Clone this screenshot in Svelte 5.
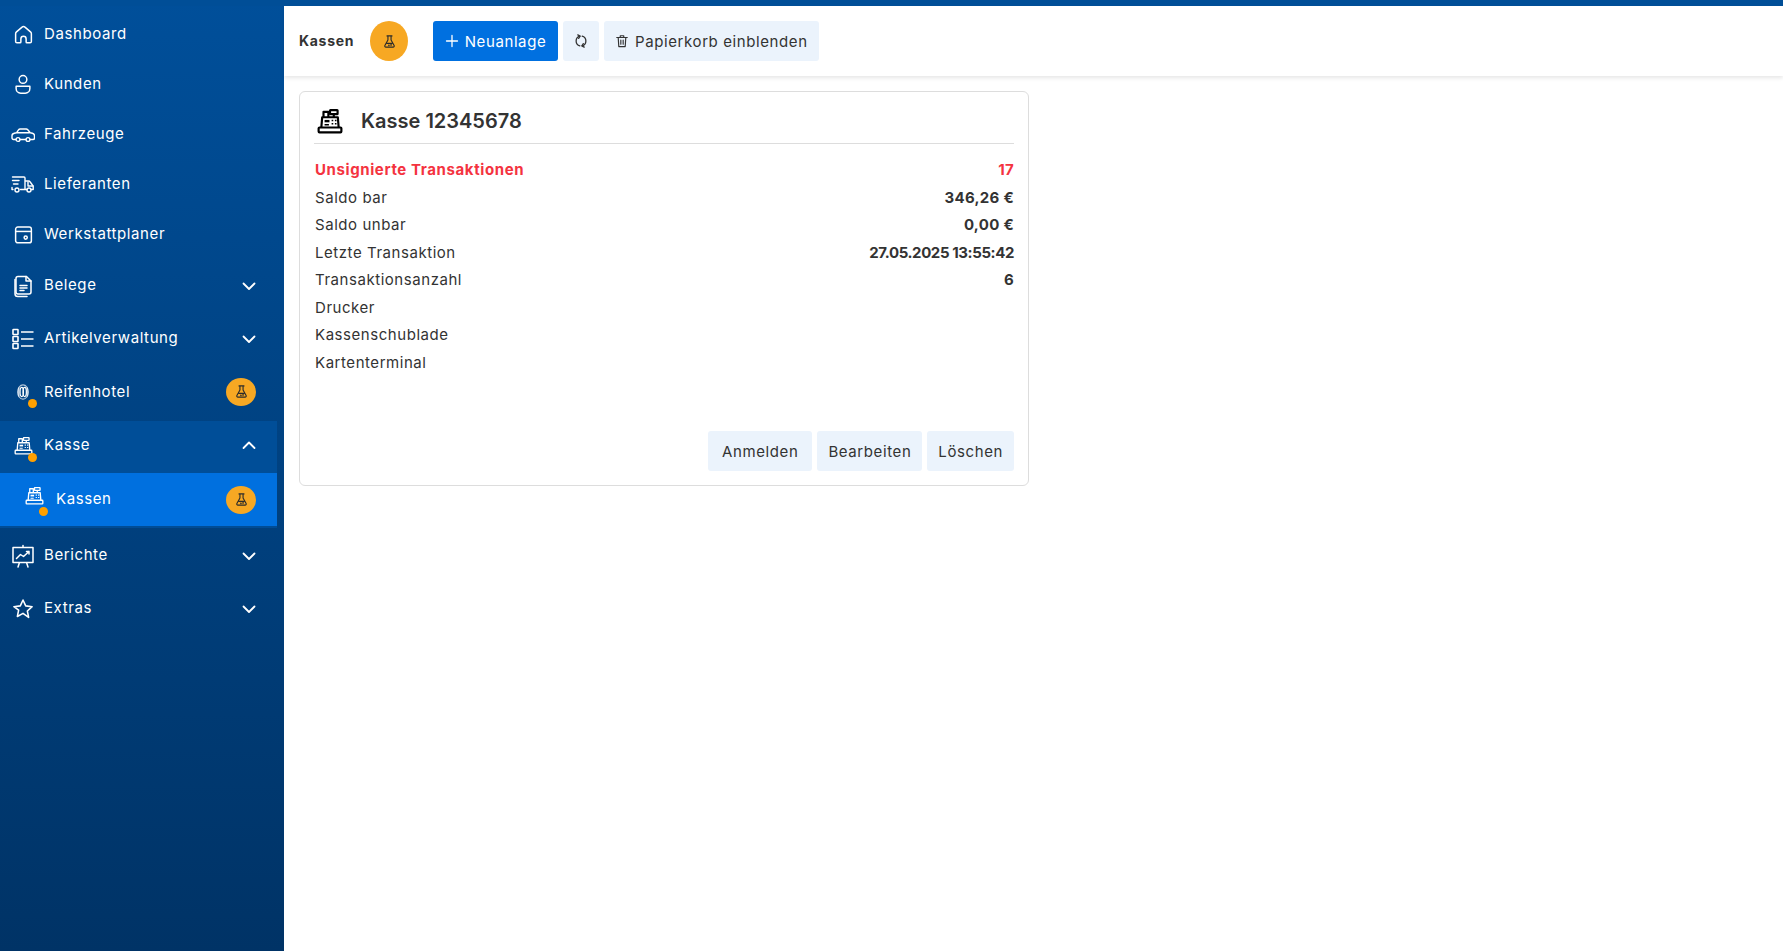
<script>
  const rows = [
    { label: 'Unsignierte Transaktionen', value: '17', alert: true },
    { label: 'Saldo bar', value: '346,26 €' },
    { label: 'Saldo unbar', value: '0,00 €' },
    { label: 'Letzte Transaktion', value: '27.05.2025 13:55:42', tight: true },
    { label: 'Transaktionsanzahl', value: '6' },
    { label: 'Drucker', value: '' },
    { label: 'Kassenschublade', value: '' },
    { label: 'Kartenterminal', value: '' }
  ];
</script>

{#snippet flask(size)}
  <svg class="flask" width={size} height={size} viewBox="0 0 24 24" fill="none" stroke="currentColor" stroke-width="1.8" stroke-linecap="round" stroke-linejoin="round">
    <path d="M8 3h8M9.5 3v6.5L4.6 18.4A1.8 1.8 0 0 0 6.2 21h11.600a1.800 1.800 0 0 0 1.600-2.600L14.500 9.500V3"/>
    <path d="M7.500 15h9"/><circle cx="11" cy="18" r=".5"/><circle cx="14.500" cy="17.500" r=".5"/>
  </svg>
{/snippet}

{#snippet register(size, sw)}
  <svg width={size} height={size} viewBox="0 0 24 24" fill="none" stroke="currentColor" stroke-width={sw} stroke-linejoin="round">
    <rect x="1.500" y="18" width="21" height="4.500" rx=".8"/>
    <path d="M4 18l.8-9.500h14.400L20 18"/>
    <path d="M6 8.500V3.500h4.500v5"/>
    <rect x="12" y="2" width="7" height="3.600" rx=".4"/>
    <path d="M15.500 5.600v2.900"/>
    <rect x="7" y="11" width="4.500" height="2.200" fill="currentColor" stroke="none"/>
    <path d="M13.500 11.500h1.500M16.500 11.500H18M13.500 14.500h1.500M16.500 14.500H18M7 15.500h4" stroke-width="1.400"/>
  </svg>
{/snippet}

{#snippet chevron(up)}
  <svg class="chev" width="16" height="16" viewBox="0 0 16 16" fill="none" stroke="currentColor" stroke-width="1.800" stroke-linecap="round" stroke-linejoin="round">
    {#if up}<path d="M2.500 11L8 5.500l5.500 5.500"/>{:else}<path d="M2.500 5.500L8 11l5.500-5.500"/>{/if}
  </svg>
{/snippet}

<div class="page">
  <aside class="side">
    <nav>
      <a class="item plain">
        <span class="ico"><svg width="21" height="21" viewBox="0 0 24 24" fill="none" stroke="currentColor" stroke-width="1.700" stroke-linejoin="round"><path d="M4.500 21.500a1.500 1.500 0 0 1-1.500-1.500v-8.800a3 3 0 0 1 1-2.200l6-5.200a3 3 0 0 1 4 0l6 5.200a3 3 0 0 1 1 2.200V20a1.500 1.500 0 0 1-1.500 1.500H16a1 1 0 0 1-1-1V17a3 3 0 0 0-6 0v3.500a1 1 0 0 1-1 1z"/></svg></span>
        <span class="lbl">Dashboard</span>
      </a>
      <a class="item plain">
        <span class="ico"><svg width="22" height="22" viewBox="0 0 24 24" fill="none" stroke="currentColor" stroke-width="1.600"><circle cx="12" cy="7" r="4.200"/><path d="M4.500 14.500h15v2.500a5 5 0 0 1-5 5h-5a5 5 0 0 1-5-5z" stroke-linejoin="round"/></svg></span>
        <span class="lbl">Kunden</span>
      </a>
      <a class="item plain">
        <span class="ico"><svg width="24" height="24" viewBox="0 0 24 24" fill="none" stroke="currentColor" stroke-width="1.400" stroke-linejoin="round"><path d="M5 17.500H2.500A1.500 1.500 0 0 1 1 16v-2.200c0-1.400 1-2.200 2.300-2.500l2.200-.5 2-3a2 2 0 0 1 1.700-.8h6a2 2 0 0 1 1.600.8l2.400 3 2.200.5c1.300.3 2.100 1.100 2.100 2.500V16a1.500 1.500 0 0 1-1.500 1.500H19M9 17.500h6M5.500 10.800h13"/><circle cx="7" cy="17.500" r="1.900"/><circle cx="17" cy="17.500" r="1.900"/></svg></span>
        <span class="lbl">Fahrzeuge</span>
      </a>
      <a class="item plain">
        <span class="ico"><svg width="24" height="24" viewBox="0 0 24 24" fill="none" stroke="currentColor" stroke-width="1.400" stroke-linecap="round" stroke-linejoin="round"><path d="M1.500 5h11.500a1 1 0 0 1 1 1v11.500H9.500M14 9h3.500a2 2 0 0 1 1.700 1l3 4.200v3.300h-2M14 17.500h2M1.500 8.500H8M2.500 12H7M1 15.500V17.500h1"/><path d="M17 10v4h5"/><circle cx="6" cy="18" r="2"/><circle cx="18" cy="18" r="2"/></svg></span>
        <span class="lbl">Lieferanten</span>
      </a>
      <a class="item plain">
        <span class="ico"><svg width="21" height="21" viewBox="0 0 24 24" fill="none" stroke="currentColor" stroke-width="1.700"><rect x="3" y="3.500" width="18" height="18" rx="2.500"/><path d="M3 8.500h18"/><circle cx="14.500" cy="15.500" r="1.800"/></svg></span>
        <span class="lbl">Werkstattplaner</span>
      </a>
      <a class="item tall">
        <span class="ico"><svg width="24" height="24" viewBox="0 0 24 24" fill="none" stroke="currentColor" stroke-width="1.500" stroke-linejoin="round" stroke-linecap="round"><path d="M7 2.500h8.500L20 7v11a2 2 0 0 1-2 2H7a2 2 0 0 1-2-2V4.500a2 2 0 0 1 2-2z"/><path d="M15 2.500V7h5M9 11.500h7M9 14h7M9 16.500h4"/><path d="M4 5.500v14.200A2.800 2.800 0 0 0 6.800 22.500H16"/></svg></span>
        <span class="lbl">Belege</span>
        {@render chevron(false)}
      </a>
      <a class="item tall">
        <span class="ico"><svg width="24" height="24" viewBox="0 0 24 24" fill="none" stroke="currentColor" stroke-width="1.600"><rect x="2" y="2.500" width="5" height="5" rx=".6"/><rect x="2" y="9.500" width="5" height="5" rx=".6"/><rect x="2" y="16.500" width="5" height="5" rx=".6"/><path d="M10 5h12.500M10 12h12.500M10 19h12.500"/></svg></span>
        <span class="lbl">Artikelverwaltung</span>
        {@render chevron(false)}
      </a>
      <a class="item tall hotel">
        <span class="ico"><svg width="20" height="20" viewBox="0 0 24 24" fill="none" stroke="currentColor" stroke-width="1.400"><ellipse cx="12" cy="12" rx="6.500" ry="8.500" opacity=".7"/><ellipse cx="10.500" cy="12" rx="2" ry="5.500"/><ellipse cx="14" cy="12" rx="2" ry="5.500"/><path d="M7 6.500v11M17 6.500v11" stroke-width="2" opacity=".7"/></svg><i class="dot"></i></span>
        <span class="lbl">Reifenhotel</span>
        <span class="badge">{@render flask(15)}</span>
      </a>
      <div class="group">
        <a class="item head">
          <span class="ico">{@render register(19, 1.700)}<i class="dot"></i></span>
          <span class="lbl">Kasse</span>
          {@render chevron(true)}
        </a>
        <a class="item sub">
          <span class="ico">{@render register(19, 1.700)}<i class="dot"></i></span>
          <span class="lbl">Kassen</span>
          <span class="badge">{@render flask(15)}</span>
        </a>
      </div>
      <a class="item tall">
        <span class="ico"><svg width="24" height="24" viewBox="0 0 24 24" fill="none" stroke="currentColor" stroke-width="1.500" stroke-linecap="round" stroke-linejoin="round"><path d="M2 3.500h20V18.500H2zM12 1.500v2M8.500 18.500L7 23M15.500 18.500L17 23"/><path d="M5.500 14.500l4-4 3 2 5.500-5M15.500 7.500H18V10"/></svg></span>
        <span class="lbl">Berichte</span>
        {@render chevron(false)}
      </a>
      <a class="item tall">
        <span class="ico"><svg width="22" height="22" viewBox="0 0 24 24" fill="none" stroke="currentColor" stroke-width="1.700" stroke-linejoin="round"><path d="M12 2.200l2.950 6.400 7 .85-5.180 4.780 1.380 6.920L12 16.700l-6.150 3.450 1.380-6.920L2.050 9.450l7-.85z"/></svg></span>
        <span class="lbl">Extras</span>
        {@render chevron(false)}
      </a>
    </nav>
  </aside>

  <div class="main">
    <header class="top">
      <span class="title">Kassen</span>
      <span class="badge big">{@render flask(15)}</span>
      <div class="actions">
        <button class="btn primary">
          <svg width="14" height="14" viewBox="0 0 14 14" fill="none" stroke="currentColor" stroke-width="1.300" stroke-linecap="round"><path d="M7 1.500v11M1.500 7h11"/></svg>
          Neuanlage
        </button>
        <button class="btn icon" aria-label="Aktualisieren">
          <svg width="14" height="14" viewBox="0 0 24 24" fill="none" stroke="currentColor" stroke-width="2.200" stroke-linecap="round" stroke-linejoin="round"><path d="M10 3.700A8.600 8.600 0 0 0 10 20.300M14 20.300A8.600 8.600 0 0 0 14 3.700"/><path d="M6.500 1.500L10.500 3.700 8 7.500M17.500 22.500L13.500 20.300 16 16.500"/></svg>
        </button>
        <button class="btn">
          <svg width="14" height="14" viewBox="0 0 24 24" fill="none" stroke="currentColor" stroke-width="2" stroke-linecap="round" stroke-linejoin="round"><path d="M3 6h18M9 6V3h6v3M5.500 6l1 15.500h11l1-15.500M10 10.500v7M14 10.500v7"/></svg>
          Papierkorb einblenden
        </button>
      </div>
    </header>

    <section class="card">
      <div class="card-head">
        <span class="card-ico">{@render register(26, 2)}</span>
        <h2>Kasse 12345678</h2>
      </div>
      <dl class="rows">
        {#each rows as row}
          <div class="row" class:alert={row.alert} class:tight={row.tight}>
            <dt>{row.label}</dt>
            <dd>{row.value}</dd>
          </div>
        {/each}
      </dl>
      <div class="card-foot">
        <button class="btn wide">Anmelden</button>
        <button class="btn">Bearbeiten</button>
        <button class="btn">Löschen</button>
      </div>
    </section>
  </div>
</div>

<style>
  :global(body) {
    margin: 0;
    background: #fff;
    font-family: Inter, "Noto Sans", sans-serif;
    font-size: 15px;
    color: #333;
  }
  .page {
    display: flex;
    height: 951px;
    overflow: hidden;
    border-top: 6px solid #004e97;
    box-sizing: border-box;
  }
  .side {
    width: 284px;
    flex: none;
    margin-top: -6px;
    padding-top: 9px;
    box-sizing: border-box;
    background: linear-gradient(#004f9a, #003366);
    color: #fff;
  }
  nav { width: 277px; }
  .item {
    display: flex;
    align-items: center;
    height: 53px;
    padding: 0 20px 0 11px;
    box-sizing: border-box;
  }
  .plain { height: 50px; }
  .group { margin: 3px 0; box-shadow: 0 2px 0 #004c95; }
  .head { height: 52px; background: #004e98; }
  .sub { background: #0070df; padding-left: 24px; height: 53px; }
  .ico {
    position: relative;
    width: 24px;
    height: 24px;
    display: flex;
    align-items: center;
    justify-content: center;
    margin-right: 9px;
    flex: none;
  }
  .sub .ico { width: 20px; height: 20px; margin-right: 12px; }
  .head .ico svg { margin-top: -4px; }
  .sub .ico svg { margin-top: -8px; }
  .lbl {
    flex: 1;
    margin-top: -2px;
    letter-spacing: .6px;
    color: #fff;
  }
  .hotel .lbl { margin-top: 0; }
  .head .lbl { margin-top: -6px; }
  .head .chev { margin-top: -4px; }
  .dot {
    position: absolute;
    width: 9px;
    height: 9px;
    border-radius: 50%;
    background: #ffa000;
    right: -2px;
    bottom: -4px;
  }
  .head .dot { bottom: -2.500px; }
  .sub .dot { right: -3.800px; bottom: -6.500px; }
  .chev { color: #fff; }
  .badge {
    width: 30px;
    height: 28px;
    border-radius: 50%;
    background: #f7a823;
    color: #2b2b2b;
    display: flex;
    align-items: center;
    justify-content: center;
    flex: none;
    margin-right: 1px;
  }
  .badge.big { width: 38px; height: 40px; margin: 0; }
  .main { flex: 1; min-width: 0; }
  .top {
    height: 70px;
    display: flex;
    align-items: center;
    padding-left: 15px;
    box-sizing: border-box;
    background: #fff;
    box-shadow: 0 2px 4px rgba(0, 0, 0, .1);
  }
  .title { font-weight: 700; font-size: 14px; width: 71px; letter-spacing: .7px; margin-top: -2px; }
  .actions { display: flex; gap: 5px; margin-left: 25px; }
  .btn {
    height: 40px;
    display: inline-flex;
    align-items: center;
    justify-content: center;
    gap: 6px;
    padding: 0 11px;
    border: 0;
    border-radius: 3px;
    background: #ebf3fc;
    color: #333;
    font: inherit;
    letter-spacing: .6px;
  }
  .btn.primary { background: #0070e0; color: #fff; width: 125px; padding: 0; }
  .btn.icon { width: 36px; padding: 0; }
  .btn.wide { padding: 0 14px; }
  .card {
    margin: 15px 0 0 15px;
    width: 730px;
    height: 395px;
    box-sizing: border-box;
    border: 1.500px solid #ddd;
    border-radius: 6px;
    padding: 0 14px 0 15px;
    display: flex;
    flex-direction: column;
  }
  .card-head {
    display: flex;
    align-items: center;
    height: 52px;
    padding-top: 7px;
    box-sizing: border-box;
    margin-left: -1px;
    border-bottom: 1px solid #ddd;
  }
  .card-ico { width: 47px; padding-left: 3px; box-sizing: border-box; display: flex; color: #000; }
  h2 { margin: 0; font-size: 20px; font-weight: 600; letter-spacing: 0; color: #333; }
  .rows { margin: 12px 0 0; }
  .row {
    display: flex;
    justify-content: space-between;
    height: 27.500px;
    align-items: center;
  }
  dt { letter-spacing: .55px; }
  dd { margin: 0; font-weight: 700; letter-spacing: .3px; }
  .tight dd { letter-spacing: -.4px; }
  .alert dt, .alert dd { color: #f4333f; font-weight: 700; }
  .alert dt { letter-spacing: .6px; }
  .card-foot {
    margin-top: auto;
    margin-bottom: 14px;
    display: flex;
    justify-content: flex-end;
    gap: 5px;
  }
</style>
